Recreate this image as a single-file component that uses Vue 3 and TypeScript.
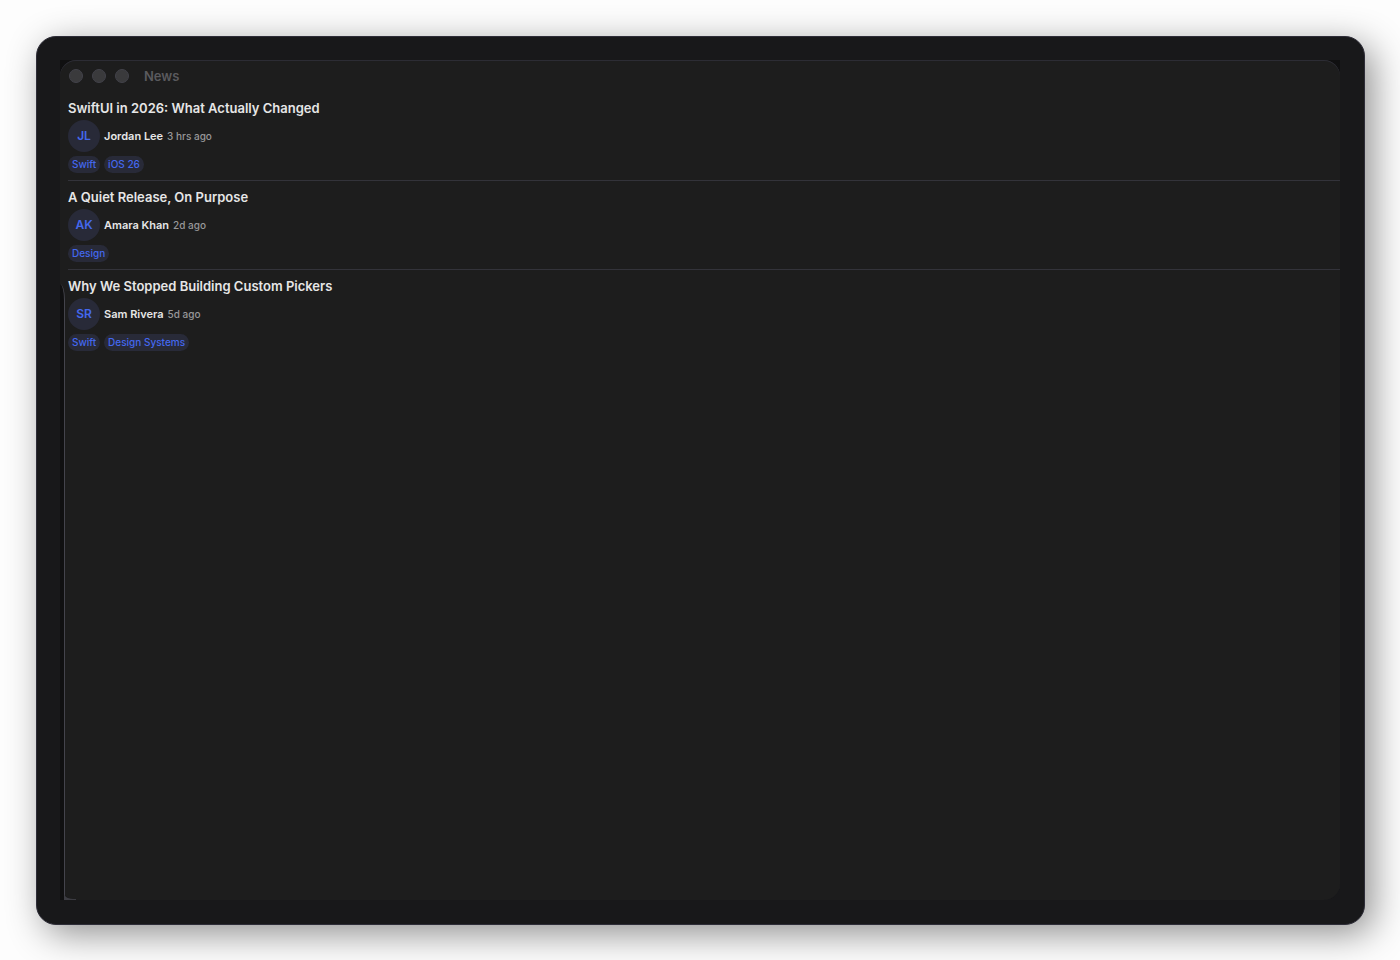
<script setup lang="ts">
interface Article {
  id: number
  title: string
  initials: string
  author: string
  age: string
  tags: string[]
}

const articles: Article[] = [
  { id: 1, title: 'SwiftUI in 2026: What Actually Changed', initials: 'JL', author: 'Jordan Lee', age: '3 hrs ago', tags: ['Swift', 'iOS 26'] },
  { id: 2, title: 'A Quiet Release, On Purpose', initials: 'AK', author: 'Amara Khan', age: '2d ago', tags: ['Design'] },
  { id: 3, title: 'Why We Stopped Building Custom Pickers', initials: 'SR', author: 'Sam Rivera', age: '5d ago', tags: ['Swift', 'Design Systems'] },
]
</script>

<template>
  <div class="desktop">
    <div class="frame">
      <div class="screen">
        <main class="window">
          <header class="titlebar">
            <div class="lights">
              <button type="button" class="light" aria-label="Close"></button>
              <button type="button" class="light" aria-label="Minimize"></button>
              <button type="button" class="light" aria-label="Zoom"></button>
            </div>
            <h1 class="name">News</h1>
          </header>
          <section class="list">
            <article v-for="a in articles" :key="a.id" class="item">
              <h2 class="title">{{ a.title }}</h2>
              <div class="byline">
                <span class="avatar">{{ a.initials }}</span>
                <span class="author">{{ a.author }}</span>
                <span class="age">{{ a.age }}</span>
              </div>
              <div class="tags">
                <span v-for="t in a.tags" :key="t" class="tag">{{ t }}</span>
              </div>
            </article>
          </section>
        </main>
        <div class="edge" aria-hidden="true"></div>
        <svg class="corner" width="12" height="6" viewBox="0 0 12 6" aria-hidden="true">
          <path d="M0 0C1 3 4 5 12 5V6H0Z" fill="#3c3c42" />
        </svg>
      </div>
    </div>
  </div>
</template>

<style>
body {
  margin: 0;
  background: #fdfdfd;
}
</style>

<style scoped>
.desktop {
  box-sizing: border-box;
  min-height: 100vh;
  padding: 36px 35px 35px 36px;
  display: flex;
  overflow: hidden;
  background: #fdfdfd;
  font-family: Inter, "Liberation Sans", sans-serif;
}
.frame {
  flex: 1;
  display: flex;
  padding: 23px 24px 24px 23px;
  border: 1px solid #2e2d38;
  border-radius: 20px;
  background: #18181a;
  box-shadow: 8px 9px 36px rgba(0, 0, 0, 0.43);
}
.screen {
  position: relative;
  flex: 1;
  display: flex;
  background: linear-gradient(#101011 50%, #18181a 50%);
}
.window {
  flex: 1;
  border-radius: 16px;
  background: #1d1d1d;
  box-shadow: inset 0 1px 0 #2c2c34;
}
.titlebar {
  display: flex;
  align-items: center;
  gap: 15px;
  height: 32px;
  padding-left: 9px;
}
.lights {
  display: flex;
  gap: 9px;
}
.light {
  width: 14px;
  height: 14px;
  padding: 0;
  border: 1px solid #42424a;
  border-radius: 50%;
  background: #3a3a3c;
}
.name {
  margin: 0;
  font-size: 13px;
  line-height: 16px;
  font-weight: 600;
  color: #5a5a5e;
}
.list {
  padding-left: 8px;
}
.item {
  display: flex;
  flex-direction: column;
  gap: 4px;
  padding: 8px 0 7px;
  border-bottom: 1px solid #33333a;
}
.item:last-child {
  border-bottom: 0;
}
.title {
  margin: 0;
  font-size: 13px;
  line-height: 16px;
  font-weight: 600;
  color: #e6e6e6;
}
.byline {
  display: flex;
  align-items: center;
  gap: 4px;
}
.avatar {
  display: grid;
  place-items: center;
  width: 32px;
  height: 32px;
  border-radius: 50%;
  background: #282a38;
  color: #4468ee;
  font-size: 12px;
  line-height: 16px;
  font-weight: 600;
}
.author {
  font-size: 11px;
  font-weight: 600;
  color: #e6e6e6;
}
.age {
  font-size: 10px;
  font-weight: 500;
  color: #98989a;
}
.tags {
  display: flex;
  gap: 4px;
}
.tag {
  padding: 0 4px;
  border-radius: 9px;
  background: #282a38;
  color: #4468ee;
  font-size: 10px;
  line-height: 17px;
  font-weight: 500;
}
.edge {
  position: absolute;
  top: 224px;
  bottom: 0;
  left: 0;
  width: 4px;
  border-right: 1px solid #44444c;
  border-top-right-radius: 5px 16px;
  background: #101011;
}
.corner {
  position: absolute;
  left: 4px;
  bottom: 0;
}
</style>
